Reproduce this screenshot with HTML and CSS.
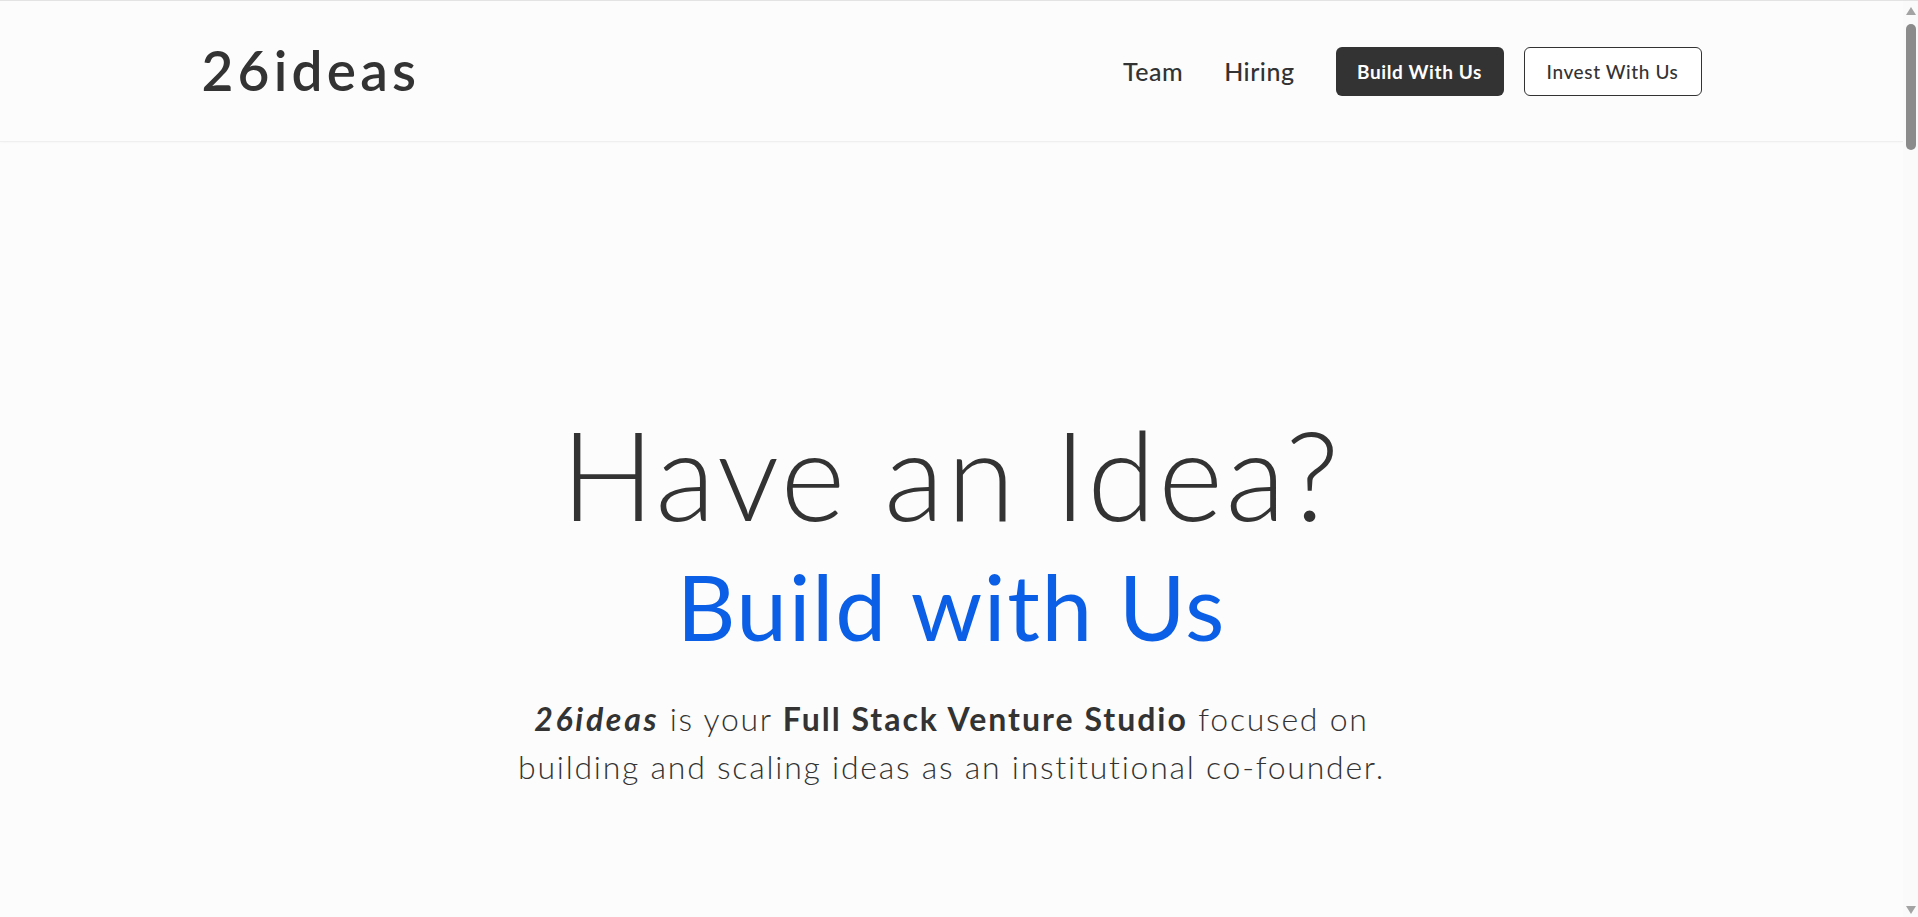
FILE: index.html
```html
<!DOCTYPE html>
<html lang="en">
<head>
<meta charset="utf-8">
<title>26ideas</title>
<link rel="stylesheet" href="styles.css">
</head>
<body>
<div class="page">
  <header class="site-header">
    <div class="container header-inner">
      <a class="logo" href="#">26ideas</a>
      <nav class="nav">
        <a class="nav-link" href="#">Team</a>
        <a class="nav-link" href="#">Hiring</a>
        <a class="btn btn-dark" href="#">Build With Us</a>
        <a class="btn btn-outline" href="#">Invest With Us</a>
      </nav>
    </div>
  </header>
  <main>
    <section class="hero">
      <h1 class="hero-title">Have an Idea?</h1>
      <h2 class="hero-sub">Build with Us</h2>
      <p class="hero-text"><em>26ideas</em> is your <strong>Full Stack Venture Studio</strong> focused on building and scaling ideas as an institutional co-founder.</p>
    </section>
  </main>
</div>
<div class="scrollbar" aria-hidden="true">
  <span class="arrow arrow-up"></span>
  <span class="thumb"></span>
  <span class="track-rest"></span>
  <span class="arrow arrow-down"></span>
</div>
</body>
</html>
```

FILE: styles.css
```css
html, body {
  margin: 0;
  padding: 0;
  height: 100%;
  overflow: hidden;
}
body {
  display: flex;
  background: #fcfcfc;
  color: #333;
  font-family: "Lato", "Open Sans", sans-serif;
  border-top: 1px solid #e3e3e3;
  box-sizing: border-box;
}
a {
  color: inherit;
  text-decoration: none;
}
.page {
  flex: 1;
  min-width: 0;
}
.container {
  max-width: 1500px;
  margin: 0 auto;
}
.site-header {
  height: 140px;
  border-bottom: 1px solid #efefef;
  box-shadow: 0 1px 2px rgba(0,0,0,0.025);
}
.header-inner {
  height: 100%;
  display: flex;
  align-items: center;
  justify-content: space-between;
}
.logo {
  font-size: 55px;
  font-weight: 600;
  letter-spacing: 4.2px;
  color: #333;
  margin-top: -2px;
}
.nav {
  display: flex;
  align-items: center;
}
.nav-link {
  font-size: 25px;
  font-weight: 500;
  letter-spacing: 0.5px;
  margin-right: 41px;
}
.btn {
  display: flex;
  align-items: center;
  justify-content: center;
  height: 49px;
  box-sizing: border-box;
  border-radius: 6px;
  font-size: 19px;
  letter-spacing: 0.6px;
}
.btn-dark {
  width: 168px;
  background: #333;
  color: #fff;
  font-weight: 700;
}
.btn-outline {
  width: 178px;
  margin-left: 20px;
  border: 1px solid #333;
  background: #fff;
  color: #333;
  font-weight: 500;
}
.hero {
  display: flex;
  flex-direction: column;
  align-items: center;
  text-align: center;
  padding-top: 260px;
}
.hero-title {
  margin: 0;
  font-size: 124px;
  font-weight: 300;
  line-height: 1.15;
  letter-spacing: 2.7px;
}
.hero-sub {
  margin: 9px 0 0;
  font-size: 91px;
  font-weight: 400;
  color: #0b5fe6;
  line-height: 1.15;
  letter-spacing: 1.6px;
}
.hero-text {
  margin: 37px 0 0;
  max-width: 900px;
  font-size: 32px;
  font-weight: 300;
  line-height: 48px;
  letter-spacing: 1.75px;
}
.hero-text strong {
  font-weight: 700;
  letter-spacing: 2px;
}
.hero-text em {
  font-weight: 700;
  letter-spacing: 2.7px;
}
.scrollbar {
  width: 15px;
  height: 100%;
  display: flex;
  flex-direction: column;
  align-items: center;
  background: #fafafa;
}
.arrow {
  width: 0;
  height: 0;
  border-left: 5px solid transparent;
  border-right: 5px solid transparent;
}
.arrow-up {
  margin-top: 6px;
  border-bottom: 8px solid #a3a3a3;
}
.arrow-down {
  margin-bottom: 3px;
  border-top: 8px solid #a3a3a3;
}
.thumb {
  margin-top: 9px;
  width: 10px;
  height: 126px;
  border-radius: 5px;
  background: #8b8b8b;
}
.track-rest {
  flex: 1;
}
```
